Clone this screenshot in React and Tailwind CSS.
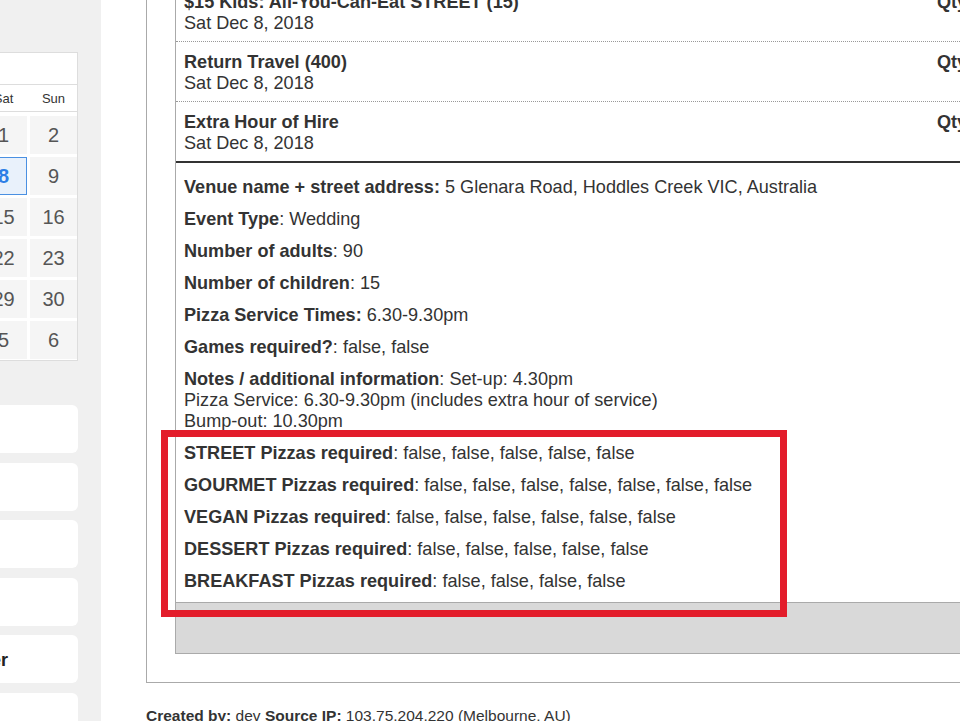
import React from "react";

const weekdays = ["Mon", "Tue", "Wed", "Thu", "Fri", "Sat", "Sun"];
const weeks = [
  [26, 27, 28, 29, 30, 1, 2],
  [3, 4, 5, 6, 7, 8, 9],
  [10, 11, 12, 13, 14, 15, 16],
  [17, 18, 19, 20, 21, 22, 23],
  [24, 25, 26, 27, 28, 29, 30],
  [31, 1, 2, 3, 4, 5, 6],
];

const lineItems = [
  { name: "$15 Kids: All-You-Can-Eat STREET (15)", qty: "Qty: 1" },
  { name: "Return Travel (400)", qty: "Qty: 1" },
  { name: "Extra Hour of Hire", qty: "Qty: 1" },
];

const pizzas = [
  ["STREET", 5],
  ["GOURMET", 7],
  ["VEGAN", 6],
  ["DESSERT", 5],
  ["BREAKFAST", 4],
];

function Calendar() {
  return (
    <div className="bg-white border border-[#ddd]">
      <div className="h-[32px] border-b border-[#ddd] flex items-center justify-center text-[15px] font-bold">
        December 2018
      </div>
      <div className="h-[27px] pt-[1px] border-b border-[#ddd] grid grid-cols-[repeat(7,47px)] gap-x-[3px] items-center text-[13px] text-[#333]">
        {weekdays.map((d) => (
          <div key={d} className="text-center">{d}</div>
        ))}
      </div>
      <div className="pt-[4px] pb-[1px] grid grid-cols-[repeat(7,47px)] gap-[3px]">
        {weeks.flat().map((n, i) => {
          const selected = i === 12;
          return (
            <div
              key={i}
              className={
                selected
                  ? "h-[38px] flex items-center justify-center text-[20px] font-bold text-[#2d7fe6] bg-[#e9f1fb] border border-[#4a90e2]"
                  : "h-[38px] flex items-center justify-center text-[20px] text-[#555] bg-[#f5f5f5]"
              }
            >
              {n}
            </div>
          );
        })}
      </div>
    </div>
  );
}

function Sidebar() {
  return (
    <div className="w-[101px] shrink-0 bg-[#f0f0f0] overflow-hidden pt-[52px]">
      <div className="w-[349px] ml-[-271px]">
        <Calendar />
        <div className="mt-[44px] flex flex-col gap-[9.5px]">
          {["Bookings", "Customers", "Products", "Reports", "Reminder", "Settings"].map((t, i) => (
            <div
              key={t}
              className="h-[48px] rounded-[6px] bg-white flex items-center justify-end pr-[70px] pt-[2px] text-[18px] font-bold text-[#222]"
            >
              {i === 4 ? t : ""}
            </div>
          ))}
        </div>
      </div>
    </div>
  );
}

function Detail({ label, boldColon, children }) {
  return (
    <div>
      <span className="font-bold">{label}{boldColon ? ":" : ""}</span>
      {boldColon ? "" : ":"} {children}
    </div>
  );
}

export default function App() {
  return (
    <div className="relative w-[960px] h-[721px] overflow-hidden flex bg-white text-[#333] font-['Liberation_Sans',Arial,Helvetica,sans-serif]">
      <Sidebar />

      <div className="flex-1 min-w-0 overflow-hidden pl-[45px]">
        <div className="w-[880px] -mt-[18px] border-l border-b border-[#aaa] px-[28px] pb-[28px]">
          <div className="border-l border-[#aaa] text-[18.1px] leading-[21px]">
            {lineItems.map((item, i) => (
              <div
                key={item.name}
                className={
                  i === lineItems.length - 1
                    ? "flex pl-[8px] pt-[10px] pb-[7px] border-b-2 border-[#333]"
                    : "flex pl-[8px] pt-[10px] pb-[7px] border-b border-dotted border-[#999]"
                }
              >
                <div className="w-[753px] shrink-0">
                  <div className="font-bold whitespace-nowrap">{item.name}</div>
                  <div>Sat Dec 8, 2018</div>
                </div>
                <div className="font-bold whitespace-nowrap">{item.qty}</div>
              </div>
            ))}

            <div className="pl-[8px] pt-[14px] pb-[10px] flex flex-col gap-[11px]">
              <Detail label="Venue name + street address" boldColon>
                5 Glenara Road, Hoddles Creek VIC, Australia
              </Detail>
              <Detail label="Event Type">Wedding</Detail>
              <Detail label="Number of adults">90</Detail>
              <Detail label="Number of children">15</Detail>
              <Detail label="Pizza Service Times" boldColon>6.30-9.30pm</Detail>
              <Detail label="Games required?">false, false</Detail>
              <div>
                <span className="font-bold">Notes / additional information</span>: Set-up: 4.30pm
                <br />
                Pizza Service: 6.30-9.30pm (includes extra hour of service)
                <br />
                Bump-out: 10.30pm
              </div>
              {pizzas.map(([kind, n]) => (
                <Detail key={kind} label={`${kind} Pizzas required`}>
                  {Array(n).fill("false").join(", ")}
                </Detail>
              ))}
            </div>

            <div className="h-[52px] bg-[#d9d9d9] border-y border-[#aaa]" />
          </div>
        </div>

        <div className="mt-[24px] text-[15.5px] leading-[18px] whitespace-nowrap">
          <span className="font-bold">Created by:</span> dev <span className="font-bold">Source IP:</span> 103.75.204.220 (Melbourne, AU)
        </div>
      </div>

      {/* highlight annotation */}
      <div className="absolute left-[161px] top-[430px] w-[626px] h-[187px] border-[7px] border-[#e31d2b]" />
    </div>
  );
}
